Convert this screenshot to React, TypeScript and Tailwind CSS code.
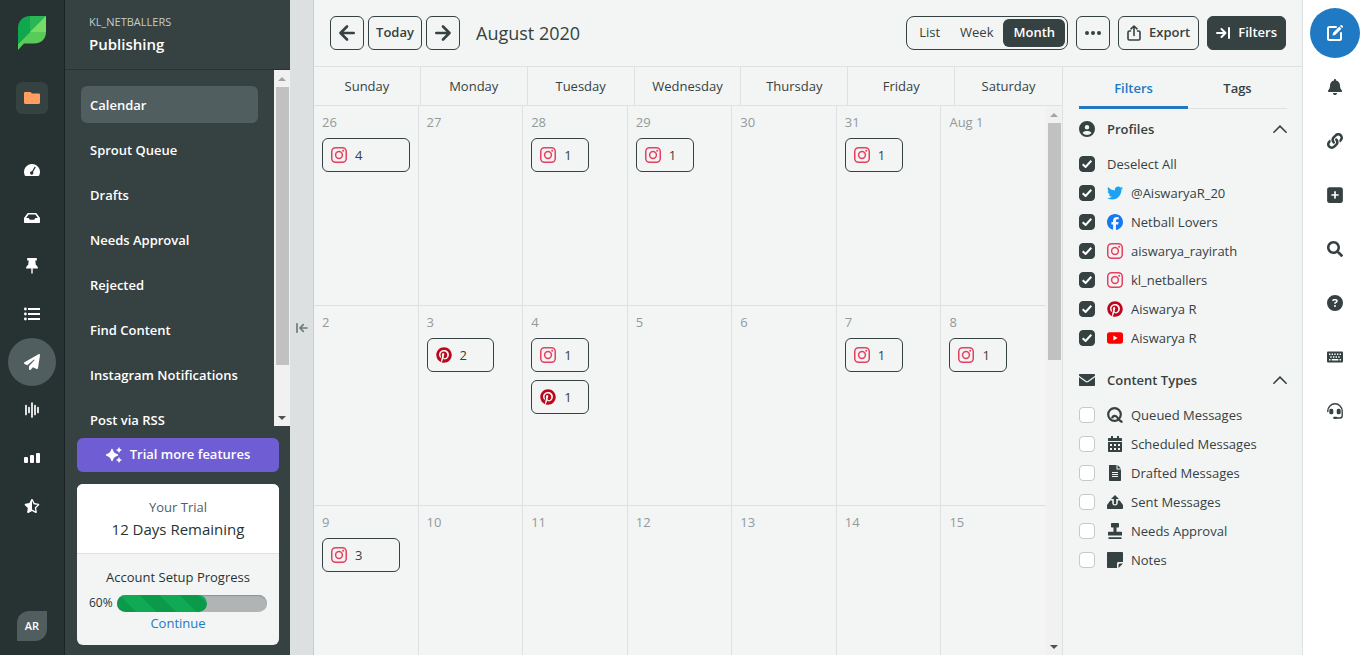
import { useState } from 'react'
import type { ReactNode } from 'react'
import { FaLink, FaSearch, FaStarHalfAlt } from 'react-icons/fa'
import {
  FaBell,
  FaCircleQuestion,
  FaCircleUser,
  FaFacebook,
  FaPaperPlane,
  FaPinterest,
  FaSquarePlus,
  FaTwitter,
} from 'react-icons/fa6'

type Network = 'instagram' | 'pinterest'

interface Post {
  network: Network
  count: number
}

interface Day {
  label: string
  posts?: Post[]
}

const navItems = [
  'Calendar',
  'Sprout Queue',
  'Drafts',
  'Needs Approval',
  'Rejected',
  'Find Content',
  'Instagram Notifications',
  'Post via RSS',
]

const weekdays = ['Sunday', 'Monday', 'Tuesday', 'Wednesday', 'Thursday', 'Friday', 'Saturday']

const days: Day[] = [
  { label: '26', posts: [{ network: 'instagram', count: 4 }] },
  { label: '27' },
  { label: '28', posts: [{ network: 'instagram', count: 1 }] },
  { label: '29', posts: [{ network: 'instagram', count: 1 }] },
  { label: '30' },
  { label: '31', posts: [{ network: 'instagram', count: 1 }] },
  { label: 'Aug 1' },
  { label: '2' },
  { label: '3', posts: [{ network: 'pinterest', count: 2 }] },
  {
    label: '4',
    posts: [
      { network: 'instagram', count: 1 },
      { network: 'pinterest', count: 1 },
    ],
  },
  { label: '5' },
  { label: '6' },
  { label: '7', posts: [{ network: 'instagram', count: 1 }] },
  { label: '8', posts: [{ network: 'instagram', count: 1 }] },
  { label: '9', posts: [{ network: 'instagram', count: 3 }] },
  { label: '10' },
  { label: '11' },
  { label: '12' },
  { label: '13' },
  { label: '14' },
  { label: '15' },
]

const chipWidths: Record<number, string> = {
  1: 'w-[58px]',
  2: 'w-[67px]',
  3: 'w-[78px]',
  4: 'w-[88px]',
}

function Logo() {
  return (
    <svg viewBox="0 0 28 34" className="h-[34px] w-7" role="img" aria-label="Sprout Social">
      <path d="M0 34V12C0 5 5 0 12 0h16L0 28z" fill="#0fa84e" />
      <path d="M12 0h16L12 16z" fill="#2bb656" />
      <path d="M28 0v16c0 7-5 11.500-12 11.500H6L0 34v-6z" fill="#59cb59" />
      <path d="M28 0v16H12z" fill="#75dd66" />
    </svg>
  )
}

function FolderIcon() {
  return (
    <svg viewBox="0 0 16 12" className="h-3 w-4" fill="#ff9e5e">
      <path d="M1.200 0h5.300L8 1.600h6.800c.7 0 1.200.5 1.200 1.200v8c0 .7-.5 1.200-1.200 1.200H1.200C.5 12 0 11.500 0 10.800V1.200C0 .5.500 0 1.200 0z" />
    </svg>
  )
}

function GaugeIcon() {
  return (
    <svg viewBox="0 0 16 12" className="h-3 w-4">
      <path d="M8 0a8 8 0 0 0-7.200 11.500c.2.300.5.500.8.500h12.800c.3 0 .6-.2.8-.5A8 8 0 0 0 8 0z" fill="currentColor" />
      <path d="m11 3.200-2.800 5" stroke="#273333" strokeWidth="1.300" strokeLinecap="round" />
      <circle cx="7.700" cy="9" r="1.700" fill="#273333" />
    </svg>
  )
}

function InboxIcon() {
  return (
    <svg viewBox="0 0 16 10" className="h-2.5 w-4">
      <path
        d="M4.300 0h7.400c.5 0 1 .3 1.200.7L16 5v4c0 .6-.4 1-1 1H1c-.6 0-1-.4-1-1V5L3.100.7C3.300.3 3.800 0 4.300 0zm.3 1.500L2.200 5h2.600l1 1.800h4.400l1-1.800h2.600l-2.400-3.500z"
        fill="currentColor"
        fillRule="evenodd"
      />
    </svg>
  )
}

function PinIcon() {
  return (
    <svg viewBox="0 0 12 16" className="h-4 w-3" fill="currentColor">
      <path d="M1.200 0h9.600v2.500H9.300l.5 4.500c1.300.7 2.200 1.900 2.200 3.500H6.700V15L6 16l-.7-1v-4.500H0C0 8.900.9 7.700 2.200 7l.5-4.500H1.200z" />
    </svg>
  )
}

function ListIcon() {
  return (
    <svg viewBox="0 0 16 14" className="h-3.5 w-4" fill="currentColor">
      <path d="M4 1h12v2H4zM4 6h12v2H4zM4 11h12v2H4z" />
      <circle cx="1.400" cy="2" r="1.400" />
      <circle cx="1.400" cy="7" r="1.400" />
      <circle cx="1.400" cy="12" r="1.400" />
    </svg>
  )
}

function WaveIcon() {
  return (
    <svg viewBox="0 0 14 16" className="h-4 w-3.5" stroke="currentColor" strokeWidth="1.700" strokeLinecap="round">
      <path d="M1 3.500v9M4 5.500v5M7 1v14M10 3.500v9M13 5.500v5" />
    </svg>
  )
}

function BarsIcon() {
  return (
    <svg viewBox="0 0 16 10" className="h-2.5 w-4" fill="currentColor">
      <rect x="0" y="4" width="4" height="6" rx="1" />
      <rect x="6" y="2" width="4" height="8" rx="1" />
      <rect x="12" y="0" width="4" height="10" rx="1" />
    </svg>
  )
}

function SparkleIcon() {
  return (
    <svg viewBox="0 0 16 16" className="h-4 w-4" fill="currentColor">
      <path d="M6 2.500q1 4.500 5.500 5.500-4.500 1-5.500 5.500Q5 9 .5 8 5 7 6 2.500z" stroke="currentColor" strokeWidth="1.300" strokeLinejoin="round" />
      <path d="M13 .5q.5 2 2.500 2.500-2 .5-2.500 2.500-.5-2-2.500-2.500 2-.5 2.500-2.500z" stroke="currentColor" strokeWidth=".5" />
      <path d="M13 10.500q.5 2 2.500 2.500-2 .5-2.500 2.500-.5-2-2.500-2.500 2-.5 2.500-2.500z" stroke="currentColor" strokeWidth=".5" />
    </svg>
  )
}

function ArrowIcon({ flip }: { flip?: boolean }) {
  return (
    <svg
      viewBox="0 0 16 16"
      className={flip ? 'h-4 w-4 rotate-180' : 'h-4 w-4'}
      fill="none"
      stroke="currentColor"
      strokeWidth="2.600"
      strokeLinecap="round"
      strokeLinejoin="round"
    >
      <path d="M14.700 8H1.500M8 1.500 1.500 8 8 14.500" />
    </svg>
  )
}

function CollapseIcon({ className }: { className: string }) {
  return (
    <svg viewBox="0 0 14 12" className={className} fill="none" stroke="currentColor" strokeWidth="2" strokeLinecap="round" strokeLinejoin="round">
      <path d="M1 1v10M13 6H4.500M8.500 2 4.500 6l4 4" />
    </svg>
  )
}

function ExportIcon() {
  return (
    <svg viewBox="0 0 14 16" className="h-4 w-3.5" fill="none" stroke="currentColor" strokeWidth="1.600" strokeLinecap="round" strokeLinejoin="round">
      <path d="M3.500 6H2.300C1.500 6 1 6.500 1 7.200v6.600c0 .7.500 1.200 1.300 1.200h9.400c.8 0 1.300-.5 1.300-1.200V7.200c0-.7-.5-1.200-1.300-1.200h-1.200M7 10.500V1M4 3.800 7 1l3 2.800" />
    </svg>
  )
}

function ComposeIcon() {
  return (
    <svg viewBox="0 0 18 18" className="h-[18px] w-[18px]" fill="none" stroke="currentColor">
      <path d="M10 3H3.500C2.500 3 2 3.500 2 4.500v10c0 1 .5 1.500 1.500 1.500h10c1 0 1.500-.5 1.500-1.500V9" strokeWidth="2" strokeLinecap="round" />
      <path d="m6.500 11.500.6-2.700 6.200-6.200 2.100 2.100-6.200 6.200z" fill="currentColor" stroke="none" />
      <path d="m14 1.900.7-.7c.4-.4.900-.4 1.200 0l.9.900c.4.400.4.900 0 1.200l-.7.700z" fill="currentColor" stroke="none" />
    </svg>
  )
}

function KeyboardIcon() {
  return (
    <svg viewBox="0 0 16 12" className="h-3 w-4">
      <rect y=".5" width="16" height="11" rx="1" fill="currentColor" />
      <g stroke="#fff" strokeWidth="1.400">
        <path d="M2 3.300h12" strokeDasharray="1.400 1.250" />
        <path d="M3.300 6h9.500" strokeDasharray="1.400 1.250" />
        <path d="M2 8.800h1.500M4.700 8.800h6.600M12.500 8.800H14" />
      </g>
    </svg>
  )
}

function HeadsetIcon() {
  return (
    <svg viewBox="0 0 16 16" className="h-4 w-4" fill="none" stroke="currentColor" strokeWidth="1.400" strokeLinecap="round">
      <path d="M.8 8.500V8a7.200 7.200 0 0 1 14.400 0v4.500c0 1.500-.8 2.500-2.200 2.500H8.500" />
      <rect x="3" y="6.500" width="2.600" height="4" rx=".8" fill="currentColor" />
      <rect x="10.400" y="6.500" width="2.600" height="4" rx=".8" fill="currentColor" />
      <path d="M7.200 14.800h2" strokeWidth="2.200" />
    </svg>
  )
}

function InstagramIcon() {
  return (
    <svg viewBox="0 0 16 16" className="h-4 w-4 shrink-0" fill="none" stroke="#e4405f" strokeWidth="1.500">
      <rect x=".75" y=".75" width="14.500" height="14.500" rx="3.800" />
      <circle cx="8" cy="8" r="3.400" />
      <circle cx="12.200" cy="3.800" r="1" fill="#e4405f" stroke="none" />
    </svg>
  )
}

function YoutubeIcon() {
  return (
    <svg viewBox="0 0 16 12" className="h-3 w-4">
      <rect y=".3" width="16" height="11.400" rx="2.600" fill="#f00" />
      <path d="M6.400 3.600v4.800L10.500 6z" fill="#fff" />
    </svg>
  )
}

function EnvelopeIcon() {
  return (
    <svg viewBox="0 0 16 12" className="h-3 w-4" fill="currentColor">
      <path d="M1 0h14c.6 0 1 .4 1 1v.7L8.700 7c-.5.300-1 .3-1.400 0L0 1.700V1c0-.6.400-1 1-1z" />
      <path d="M0 3.200 6.600 8c.9.600 1.900.6 2.800 0L16 3.200V11c0 .6-.4 1-1 1H1c-.6 0-1-.4-1-1z" />
    </svg>
  )
}

function ChevronIcon() {
  return (
    <svg viewBox="0 0 14 8" className="h-2 w-3.5" fill="none" stroke="currentColor" strokeWidth="1.600" strokeLinecap="round">
      <path d="M.9 7.200 7 1.100l6.100 6.100" />
    </svg>
  )
}

function QueueIcon() {
  return (
    <svg viewBox="0 0 16 16" className="h-4 w-4" fill="none" stroke="currentColor" strokeWidth="2.200">
      <circle cx="7.500" cy="7.500" r="6.300" />
      <path d="M5.200 11.500c0-1.700 1-2.700 2.600-2.700 3.400 0 3.600 6 7.700 6" />
    </svg>
  )
}

function ScheduleIcon() {
  return (
    <svg viewBox="0 0 14 16" className="h-4 w-3.5">
      <path d="M3 0h2v2h4V0h2v2h2c.6 0 1 .4 1 1v2H0V3c0-.6.400-1 1-1h2zM0 6h14v9c0 .6-.4 1-1 1H1c-.6 0-1-.4-1-1z" fill="currentColor" />
      <path d="M2 8h2v2H2zM6 8h2v2H6zM10 8h2v2h-2zM2 12h2v2H2zM6 12h2v2H6zM10 12h2v2h-2z" fill="#f3f5f5" />
    </svg>
  )
}

function DraftIcon() {
  return (
    <svg viewBox="0 0 12 16" className="h-4 w-3">
      <path d="M0 0h7.500v4.500H12V15c0 .6-.4 1-1 1H1c-.6 0-1-.4-1-1z" fill="currentColor" />
      <path d="M8.500 0 12 3.500H8.500z" fill="currentColor" />
      <path d="M3 7.500h6M3 9.500h6M3 11.500h6" stroke="#f3f5f5" />
    </svg>
  )
}

function SentIcon() {
  return (
    <svg viewBox="0 0 16 14" className="h-3.5 w-4" fill="currentColor">
      <path d="M3.300 5.500h1.900v2c0 1.800 1.100 3 2.800 3s2.800-1.200 2.800-3v-2h1.900L16 10v3c0 .6-.4 1-1 1H1c-.6 0-1-.4-1-1v-3z" />
      <path d="M8 0 4 4h2.800v4.200c0 .6.500 1 1.200 1s1.200-.4 1.200-1V4H12z" />
    </svg>
  )
}

function ApprovalIcon() {
  return (
    <svg viewBox="0 0 14 16" className="h-4 w-3.5" fill="currentColor">
      <path d="M4 0h6c.6 0 1 .4 1 1v2.500c0 .6-.4 1-1 1H8.500v4.200H13c.6 0 1 .4 1 1v2.800H0V9.700c0-.6.400-1 1-1h4.500V4.500H4c-.6 0-1-.4-1-1V1c0-.6.400-1 1-1zM.5 14.300h13V16H.5z" />
    </svg>
  )
}

function NoteIcon() {
  return (
    <svg viewBox="0 0 16 16" className="h-4 w-4" fill="currentColor">
      <path d="M1 0h14c.6 0 1 .4 1 1v9h-4.500c-.8 0-1.500.7-1.500 1.500V16H1c-.6 0-1-.4-1-1V1c0-.6.400-1 1-1z" />
      <path d="M11.500 16v-3c0-.8.700-1.500 1.500-1.500h3z" />
    </svg>
  )
}

function ScrollArrow({ down }: { down?: boolean }) {
  return (
    <svg
      viewBox="0 0 8 4"
      className={down ? 'h-1 w-2 rotate-180 text-[#505050]' : 'h-1 w-2 text-[#a3a3a3]'}
      fill="currentColor"
    >
      <path d="M4 0 8 4H0z" />
    </svg>
  )
}

function ScrollTrack({ thumb }: { thumb: string }) {
  return (
    <div className="flex w-4 shrink-0 flex-col items-center bg-[#f1f1f1]" aria-hidden="true">
      <div className="flex h-[17px] items-center">
        <ScrollArrow />
      </div>
      <div className={`w-[13px] bg-[#c1c1c1] ${thumb}`} />
      <div className="mt-auto flex h-[17px] items-center">
        <ScrollArrow down />
      </div>
    </div>
  )
}

function MainRail() {
  const items: { name: string; icon: ReactNode }[] = [
    { name: 'Dashboard', icon: <GaugeIcon /> },
    { name: 'Inbox', icon: <InboxIcon /> },
    { name: 'Tasks', icon: <PinIcon /> },
    { name: 'Feeds', icon: <ListIcon /> },
    { name: 'Publishing', icon: <FaPaperPlane className="h-4 w-4" /> },
    { name: 'Listening', icon: <WaveIcon /> },
    { name: 'Reports', icon: <BarsIcon /> },
    { name: 'Reviews', icon: <FaStarHalfAlt className="h-3.5 w-4" /> },
  ]

  return (
    <nav className="flex w-[65px] shrink-0 flex-col items-center border-r border-[#1b2424] bg-[#273333] pt-4 pb-3.5 text-white">
      <Logo />
      <button aria-label="Groups" className="mt-8 flex h-8 w-8 items-center justify-center rounded-md bg-[#364141]">
        <FolderIcon />
      </button>
      <div className="mt-8 flex flex-col">
        {items.map((item) => (
          <button
            key={item.name}
            aria-label={item.name}
            className={`flex h-12 w-12 items-center justify-center rounded-full ${
              item.name === 'Publishing' ? 'bg-[#515e5f]' : ''
            }`}
          >
            {item.icon}
          </button>
        ))}
      </div>
      <button className="mt-auto h-[30px] w-[30px] rounded-tl-xl rounded-br-xl bg-[#515e5f] text-[11px] font-semibold">
        AR
      </button>
    </nav>
  )
}

function Sidebar() {
  const [active, setActive] = useState('Calendar')

  return (
    <aside className="flex w-[225px] shrink-0 flex-col bg-[#364141] text-white">
      <header className="flex h-[70px] shrink-0 flex-col border-b border-[#273333] px-6 pt-3">
        <p className="text-[11px] leading-5 text-[#c5cccb]">KL_NETBALLERS</p>
        <h1 className="text-[15px] leading-6 font-semibold">Publishing</h1>
      </header>

      <div className="flex min-h-0 flex-1">
        <ul className="flex flex-1 flex-col gap-2 overflow-hidden p-4">
          {navItems.map((item) => (
            <li key={item}>
              <button
                onClick={() => setActive(item)}
                className={`h-[37px] w-full rounded-md px-[9px] pt-0.5 text-left text-[13px] leading-none font-semibold whitespace-nowrap ${
                  active === item ? 'bg-[#515e5f]' : ''
                }`}
              >
                {item}
              </button>
            </li>
          ))}
        </ul>
        <ScrollTrack thumb="h-[278px]" />
      </div>

      <div className="shrink-0 pt-3 pr-[11px] pb-2.5 pl-3">
        <button className="flex h-[34px] w-full items-center justify-center gap-2 rounded-md bg-[#6f5ed3] text-[13px] font-semibold">
          <SparkleIcon />
          Trial more features
        </button>
        <section className="mt-3 overflow-hidden rounded-md bg-[#f3f5f5] text-center text-[13px] leading-5 text-[#273333]">
          <div className="border-b border-[#dee1e1] bg-white pt-[13px] pb-3">
            <p className="text-[#515e5f]">Your Trial</p>
            <p className="text-[15px] leading-6 font-medium">12 Days Remaining</p>
          </div>
          <div className="px-3 pt-[13px] pb-3">
            <p>Account Setup Progress</p>
            <div className="mt-1.5 flex items-center gap-1">
              <span className="text-xs leading-5">60%</span>
              <div className="h-[17px] flex-1 rounded-full bg-[#b0b4b5] shadow-[inset_0_1px_1px_#8d9293]">
                <div className="h-full w-3/5 rounded-full bg-[repeating-linear-gradient(45deg,#0a9a49_0_14px,#10aa54_14px_28px)]" />
              </div>
            </div>
            <a href="#continue" className="block text-[#2079c3]">
              Continue
            </a>
          </div>
        </section>
      </div>
    </aside>
  )
}

function Toolbar() {
  const [view, setView] = useState('Month')
  const button = 'flex h-[34px] items-center justify-center rounded-md border border-[#364141]'

  return (
    <header className="flex h-[67px] shrink-0 items-center border-b border-[#dee1e1] px-4 text-[13px] font-bold">
      <div className="flex gap-1">
        <button aria-label="Previous month" className={`${button} w-[34px]`}>
          <ArrowIcon />
        </button>
        <button className={`${button} w-[54px] font-semibold`}>Today</button>
        <button aria-label="Next month" className={`${button} w-[34px]`}>
          <ArrowIcon flip />
        </button>
      </div>
      <h2 className="ml-4 text-lg font-medium">August 2020</h2>

      <div className="ml-auto flex gap-2">
        <div className="flex h-[34px] items-center rounded-lg border border-[#364141] p-0.5">
          {['List', 'Week', 'Month'].map((item) => (
            <button
              key={item}
              onClick={() => setView(item)}
              className={`h-7 rounded-md px-2.5 ${
                view === item ? 'bg-[#364141] font-semibold text-white' : 'font-medium'
              }`}
            >
              {item}
            </button>
          ))}
        </div>
        <button aria-label="More actions" className={`${button} w-[34px]`}>
          <svg viewBox="0 0 16 4" className="h-1 w-4" fill="currentColor">
            <circle cx="2" cy="2" r="2" />
            <circle cx="8" cy="2" r="2" />
            <circle cx="14" cy="2" r="2" />
          </svg>
        </button>
        <button className={`${button} gap-2 px-2 font-semibold`}>
          <ExportIcon />
          Export
        </button>
        <button className={`${button} gap-2 bg-[#364141] px-2 font-semibold text-white`}>
          <CollapseIcon className="h-3 w-3.5 rotate-180" />
          Filters
        </button>
      </div>
    </header>
  )
}

function PostChip({ post }: { post: Post }) {
  return (
    <button
      className={`flex h-[34px] items-center gap-2 rounded-md border border-[#364141] px-2 text-[13px] ${
        chipWidths[post.count]
      }`}
    >
      {post.network === 'instagram' ? <InstagramIcon /> : <FaPinterest className="h-4 w-4 text-[#bd081c]" />}
      <span className="pt-0.5">{post.count}</span>
    </button>
  )
}

function Calendar() {
  return (
    <section className="flex min-w-0 flex-1 flex-col" aria-label="Calendar">
      <div className="grid h-[39px] shrink-0 grid-cols-7 divide-x divide-[#dee1e1] border-b border-[#dee1e1]">
        {weekdays.map((day) => (
          <div key={day} className="flex items-center justify-center pt-0.5 text-[13px] font-medium">
            {day}
          </div>
        ))}
      </div>
      <div className="flex min-h-0 flex-1">
        <div className="grid flex-1 auto-rows-[200px] grid-cols-7 overflow-hidden">
          {days.map((day, i) => (
            <div
              key={day.label}
              className={`border-b border-[#dee1e1] p-2 ${i % 7 === 6 ? '' : 'border-r'}`}
            >
              <p className="text-[13px] leading-4 font-medium text-[#929a9b]">{day.label}</p>
              <div className="mt-2 flex flex-col gap-2">
                {day.posts?.map((post) => <PostChip key={post.network} post={post} />)}
              </div>
            </div>
          ))}
        </div>
        <ScrollTrack thumb="h-[237px]" />
      </div>
    </section>
  )
}

interface OptionProps {
  label: string
  icon?: ReactNode
  defaultChecked?: boolean
}

function Option({ label, icon, defaultChecked }: OptionProps) {
  return (
    <label className="flex h-[29px] items-center gap-3 text-[13px]">
      <span className="grid h-4 w-4 place-items-center">
        <input
          type="checkbox"
          defaultChecked={defaultChecked}
          className="peer col-start-1 row-start-1 h-4 w-4 appearance-none rounded-[4px] border border-[#c4cacb] bg-white checked:border-[#364141] checked:bg-[#364141]"
        />
        <svg
          viewBox="0 0 10 8"
          className="pointer-events-none invisible col-start-1 row-start-1 h-2 w-2.5 peer-checked:visible"
          fill="none"
          stroke="#fff"
          strokeWidth="2"
        >
          <path d="M.7 4.200 3.600 7 9.300.8" />
        </svg>
      </span>
      {icon ? (
        <span className="flex items-center gap-2">
          <span className="flex w-4 justify-center">{icon}</span>
          <span className="pt-0.5">{label}</span>
        </span>
      ) : (
        <span className="pt-0.5 font-medium">{label}</span>
      )}
    </label>
  )
}

function OptionGroup({ title, icon, children }: { title: string; icon: ReactNode; children: ReactNode }) {
  const [open, setOpen] = useState(true)

  return (
    <section>
      <button onClick={() => setOpen(!open)} className="flex h-10 w-full items-center text-[13px] font-semibold">
        {icon}
        <span className="ml-3 flex-1 pt-0.5 text-left">{title}</span>
        <ChevronIcon />
      </button>
      {open && <div>{children}</div>}
    </section>
  )
}

function FilterPanel() {
  const [tab, setTab] = useState('Filters')

  return (
    <aside className="w-[240px] shrink-0 border-l border-[#dee1e1] pr-[15px] pl-4">
      <div className="flex h-[42px] border-b border-[#dee1e1]">
        {['Filters', 'Tags'].map((item) => (
          <button
            key={item}
            onClick={() => setTab(item)}
            className={`h-[42px] border-b-3 pt-1 text-[13px] font-semibold ${item === 'Filters' ? 'w-[109px]' : 'flex-1'} ${
              tab === item ? 'border-[#2079c3] text-[#2079c3]' : 'border-transparent'
            }`}
          >
            {item}
          </button>
        ))}
      </div>

      <OptionGroup title="Profiles" icon={<FaCircleUser className="h-4 w-4" />}>
        <Option label="Deselect All" defaultChecked />
        <Option label="@AiswaryaR_20" icon={<FaTwitter className="h-4 w-4 text-[#1da1f2]" />} defaultChecked />
        <Option label="Netball Lovers" icon={<FaFacebook className="h-4 w-4 text-[#1877f2]" />} defaultChecked />
        <Option label="aiswarya_rayirath" icon={<InstagramIcon />} defaultChecked />
        <Option label="kl_netballers" icon={<InstagramIcon />} defaultChecked />
        <Option label="Aiswarya R" icon={<FaPinterest className="h-4 w-4 text-[#bd081c]" />} defaultChecked />
        <Option label="Aiswarya R" icon={<YoutubeIcon />} defaultChecked />
      </OptionGroup>

      <div className="mt-2">
        <OptionGroup title="Content Types" icon={<EnvelopeIcon />}>
          <Option label="Queued Messages" icon={<QueueIcon />} />
          <Option label="Scheduled Messages" icon={<ScheduleIcon />} />
          <Option label="Drafted Messages" icon={<DraftIcon />} />
          <Option label="Sent Messages" icon={<SentIcon />} />
          <Option label="Needs Approval" icon={<ApprovalIcon />} />
          <Option label="Notes" icon={<NoteIcon />} />
        </OptionGroup>
      </div>
    </aside>
  )
}

function UtilityRail() {
  const items: { name: string; icon: ReactNode }[] = [
    { name: 'Notifications', icon: <FaBell className="h-4 w-4" /> },
    { name: 'Links', icon: <FaLink className="h-4 w-4" /> },
    { name: 'Add', icon: <FaSquarePlus className="h-[18px] w-[18px]" /> },
    { name: 'Search', icon: <FaSearch className="h-4 w-4" /> },
    { name: 'Help', icon: <FaCircleQuestion className="h-4 w-4" /> },
    { name: 'Keyboard shortcuts', icon: <KeyboardIcon /> },
    { name: 'Support', icon: <HeadsetIcon /> },
  ]

  return (
    <nav className="flex w-[60px] shrink-0 flex-col border-l border-[#dee1e1] bg-white pt-2 pr-0.5 pl-[7px]">
      <button
        aria-label="Compose"
        className="flex h-[50px] w-[50px] items-center justify-center rounded-full bg-[#2079c3] text-white"
      >
        <ComposeIcon />
      </button>
      <div className="mt-0.5">
        {items.map((item) => (
          <button key={item.name} aria-label={item.name} className="flex h-[54px] w-full items-center justify-center">
            {item.icon}
          </button>
        ))}
      </div>
    </nav>
  )
}

export default function App() {
  return (
    <div className="flex h-screen overflow-hidden bg-[#f3f5f5] font-['Open_Sans',sans-serif] text-[#364141]">
      <MainRail />
      <Sidebar />
      <button
        aria-label="Collapse sidebar"
        className="flex w-6 shrink-0 items-center justify-center border-r border-[#c8cccc] bg-[#dce0e1] text-[#6e797a]"
      >
        <CollapseIcon className="h-2.5 w-3" />
      </button>
      <main className="flex min-w-0 flex-1 flex-col">
        <Toolbar />
        <div className="flex min-h-0 flex-1">
          <Calendar />
          <FilterPanel />
        </div>
      </main>
      <UtilityRail />
    </div>
  )
}
